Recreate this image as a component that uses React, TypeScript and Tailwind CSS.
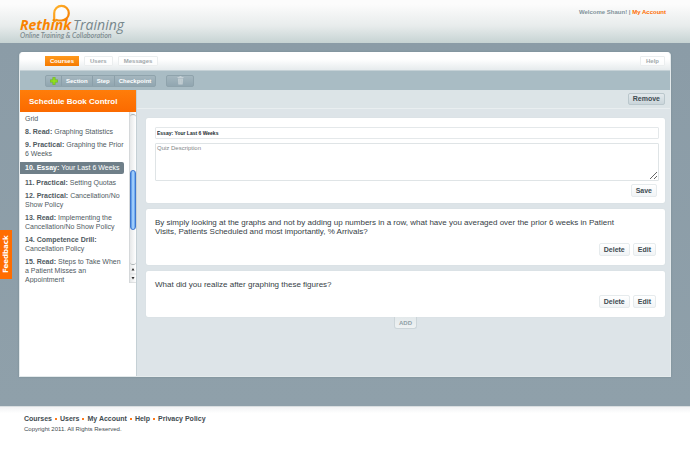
import React from "react";

const lessons = [
  { label: "", title: "Grid" },
  { label: "8. Read:", title: "Graphing Statistics" },
  { label: "9. Practical:", title: "Graphing the Prior 6 Weeks" },
  { label: "10. Essay:", title: "Your Last 6 Weeks", active: true },
  { label: "11. Practical:", title: "Setting Quotas" },
  { label: "12. Practical:", title: "Cancellation/No Show Policy" },
  { label: "13. Read:", title: "Implementing the Cancellation/No Show Policy" },
  { label: "14. Competence Drill:", title: "Cancellation Policy" },
  { label: "15. Read:", title: "Steps to Take When a Patient Misses an Appointment" },
];

const questions = [
  {
    text: "By simply looking at the graphs and not by adding up numbers in a row, what have you averaged over the prior 6 weeks in Patient Visits, Patients Scheduled and most importantly, % Arrivals?",
    height: "h-[56px]",
  },
  { text: "What did you realize after graphing these figures?", height: "h-[46px]" },
];

const footerLinks = ["Courses", "Users", "My Account", "Help", "Privacy Policy"];

function Logo() {
  return (
    <a href="#" className="relative block pt-[18px] pl-[20px] italic">
      <svg className="absolute top-[4px] left-[52px]" width="19" height="19" viewBox="0 0 19 19" aria-hidden="true">
        <defs>
          <linearGradient id="ring" x1="0" y1="0" x2="1" y2="1">
            <stop offset="0" stopColor="#ffb52e" />
            <stop offset="1" stopColor="#f47a00" />
          </linearGradient>
        </defs>
        <path
          d="M2.2 17.4 V9.2 A7.3 7.3 0 1 1 9.5 16.5 C7.4 16.5 5.6 16.3 4.6 15.9 Z"
          fill="#fff"
          fillOpacity="0.7"
          stroke="url(#ring)"
          strokeWidth="2.2"
          strokeLinejoin="round"
        />
      </svg>
      <span className="relative flex gap-[2px] font-['Open_Sans','Noto_Sans',sans-serif] text-[14px] leading-[14px]">
        <span className="font-bold text-[#f98400]">Rethink</span>
        <span className="text-[#77878c]">Training</span>
      </span>
      <span className="block font-['Lato','Noto_Sans',sans-serif] text-[7px] leading-[7px] font-semibold text-[#7d8b8f]">
        Online Training &amp; Collaboration
      </span>
    </a>
  );
}

function Tab({ children, active = false }: { children: React.ReactNode; active?: boolean }) {
  return (
    <button
      type="button"
      className={
        active
          ? "h-[10px] bg-linear-to-b from-[#ff9a1c] to-[#f57a00] px-[5px] text-[6px] leading-[10px] font-bold text-white"
          : "h-[10px] rounded-[1px] border border-[#ebeeef] bg-white/70 px-[5px] text-[6px] leading-[8px] font-bold text-[#a3a9ac]"
      }
    >
      {children}
    </button>
  );
}

function SmallButton({ children }: { children: React.ReactNode }) {
  return (
    <button
      type="button"
      className="h-[13px] rounded-[2px] border border-[#e6ebed] bg-linear-to-b from-white to-[#f1f4f6] px-[4px] text-[7px] leading-[11px] font-bold text-[#3f4c52]"
    >
      {children}
    </button>
  );
}

function Toolbar() {
  const group =
    "flex h-[12px] items-center overflow-hidden rounded-[2px] border border-[#8fa3ac] bg-linear-to-b from-[#a5b7bf] to-[#91a6b0]";
  return (
    <div className="flex h-[20px] items-center gap-[10px] border-t border-[#c5d1d6] bg-[#a9bcc4] pl-[25px]">
      <div className={group}>
        <button type="button" aria-label="Add" className="flex h-full w-[16px] items-center justify-center border-r border-[#8b9fa9]">
          <svg width="8" height="8" viewBox="0 0 8 8" aria-hidden="true">
            <path d="M2.8 0.3h2.4v2.5h2.5v2.4H5.2v2.5H2.8V5.2H0.3V2.8h2.5z" fill="#8fe01c" stroke="#63a81c" strokeWidth="0.5" />
          </svg>
        </button>
        <button type="button" className="h-full border-r border-[#8b9fa9] px-[4px] text-[6px] leading-[10px] font-bold text-white">
          Section
        </button>
        <button type="button" className="h-full border-r border-[#8b9fa9] px-[4px] text-[6px] leading-[10px] font-bold text-white">
          Step
        </button>
        <button type="button" className="h-full px-[4px] text-[6px] leading-[10px] font-bold text-white">
          Checkpoint
        </button>
      </div>
      <div className={group}>
        <button type="button" aria-label="Delete" className="flex h-full w-[26px] items-center justify-center">
          <svg width="7" height="9" viewBox="0 0 7 9" aria-hidden="true">
            <path d="M2.5 0.5h2M0.5 1.5h6" stroke="#c6d1d6" strokeWidth="1" />
            <path d="M1 2.5h5l-0.3 6H1.3z" fill="#c3ced3" />
            <path d="M2.6 3.4v4.2M4.4 3.4v4.2" stroke="#b3c1c7" strokeWidth="0.5" />
          </svg>
        </button>
      </div>
    </div>
  );
}

function Scrollbar() {
  return (
    <div className="flex w-[7px] shrink-0 flex-col border-l border-[#d5d8da] bg-linear-to-r from-[#e6e8e9] to-white" aria-hidden="true">
      <div className="pt-[2px]">
        <div className="h-[56px] rounded-t-[4px] border-t border-[#aab0b3]" />
      </div>
      <div className="h-[60px] rounded-[3px] border border-[#3f78cf] bg-linear-to-r from-[#4c8fe4] via-[#b5dcff] to-[#5b9ded]" />
      <div className="h-[35px] rounded-b-[4px] border-b border-[#aab0b3]" />
      <svg width="6" height="18" viewBox="0 0 6 18">
        <path d="M0 9h6M0 17.5h6" stroke="#d5d8da" strokeWidth="0.7" />
        <path d="M3 3l1.5 2.5h-3zM3 14.5l1.5-2.5h-3z" fill="#333" />
      </svg>
    </div>
  );
}

function Sidebar() {
  return (
    <aside className="w-[117px] shrink-0 border-r border-[#c5d0d5] bg-white">
      <h1 className="h-[22px] bg-linear-to-b from-[#ff7d0a] to-[#fb6a00] pl-[9px] text-[8px] leading-[24px] font-bold whitespace-nowrap text-white">
        Schedule Book Control
      </h1>
      <div className="flex h-[171px]">
        <ul className="flex flex-1 flex-col gap-[4px] overflow-hidden pt-[2px] text-[7px] leading-[9px] text-[#4f5a5f]">
          {lessons.map((lesson) => (
            <li
              key={lesson.title}
              className={
                lesson.active
                  ? "mr-[5px] shrink-0 rounded-r-[2px] bg-[#6f7f89] pl-[5px] leading-[12px] whitespace-nowrap text-white"
                  : "shrink-0 pr-[4px] pl-[5px]"
              }
            >
              <a href="#">
                {lesson.label && <b>{lesson.label} </b>}
                {lesson.title}
              </a>
            </li>
          ))}
        </ul>
        <Scrollbar />
      </div>
    </aside>
  );
}

function Content() {
  return (
    <main className="min-w-0 flex-1 bg-[#dde4e8]">
      <div className="flex h-[19px] items-center justify-end border-b border-[#e9eef0] bg-[#dce4e7] pr-[5px]">
        <button
          type="button"
          className="h-[12px] rounded-[2px] border border-[#bac7cc] bg-linear-to-b from-[#e3e9ec] to-[#cad5da] px-[4px] text-[7px] leading-[10px] font-bold text-[#3f4c52]"
        >
          Remove
        </button>
      </div>
      <div className="flex flex-col gap-[6px] pt-[9px] pr-[5px] pl-[9px]">
        <form className="flex h-[85px] flex-col rounded-[2px] bg-white pt-[9px] pr-[6px] pl-[9px] shadow-[0_0_1px_#c5d0d5]" onSubmit={(e) => e.preventDefault()}>
          <input
            aria-label="Quiz title"
            defaultValue="Essay: Your Last 6 Weeks"
            className="h-[12px] w-full rounded-[1px] border border-[#e4e8ea] px-px text-[5px] leading-[10px] font-bold text-[#222b30]"
          />
          <textarea
            aria-label="Quiz description"
            placeholder="Quiz Description"
            className="mt-[4px] h-[38px] w-full resize-y rounded-[1px] border border-[#dfe4e6] px-px text-[6px] leading-[9px] placeholder:text-[#7f8689]"
          />
          <div className="flex justify-end pt-[3px] pr-[2px]">
            <SmallButton>Save</SmallButton>
          </div>
        </form>
        {questions.map((q) => (
          <section key={q.text} className={`${q.height} flex flex-col justify-between rounded-[2px] bg-white px-[9px] pt-[9px] pb-[9px] shadow-[0_0_1px_#c5d0d5]`}>
            <p className="pr-[30px] text-[8px] leading-[9px] text-[#364045]">{q.text}</p>
            <div className="flex justify-end gap-[3px]">
              <SmallButton>Delete</SmallButton>
              <SmallButton>Edit</SmallButton>
            </div>
          </section>
        ))}
      </div>
      <div className="flex justify-center pr-[5px] pl-[9px]">
        <button type="button" className="h-[12px] rounded-b-[3px] border border-t-0 border-[#ccd5d9] bg-linear-to-b from-[#e3e9eb] to-[#eff2f3] px-[4px] text-[6px] leading-[10px] font-bold text-[#8fa0a7]">
          ADD
        </button>
      </div>
    </main>
  );
}

export default function App() {
  return (
    <div className="bg-white font-['Liberation_Sans',Arial,sans-serif]">
      <header className="flex h-[43px] items-start justify-between bg-linear-to-b from-[#fcfcfc] from-10% via-[#e8ecec] via-60% to-[#c6d3d3]">
        <Logo />
        <p className="pt-[8px] pr-[24px] text-[6px] leading-[9px] font-bold text-[#82939a]">
          Welcome Shaun! | <a href="#" className="text-[#ff6d00]">My Account</a>
        </p>
      </header>

      <div className="bg-linear-to-b from-[#8b9ca7] to-[#8fa0aa] pt-[9px] pr-[19px] pb-[29px] pl-[19px]">
        <div className="min-h-[325px] overflow-hidden rounded-t-[4px] border border-t-0 border-[#e4eaec] bg-[#dde4e8] shadow-[0_0_2px_#71858f]">
          <nav className="flex h-[18px] items-center justify-between bg-linear-to-b from-white from-40% to-[#e6ebed] pr-[5px] pl-[25px]">
            <div className="flex gap-[5px]">
              <Tab active>Courses</Tab>
              <Tab>Users</Tab>
              <Tab>Messages</Tab>
            </div>
            <Tab>Help</Tab>
          </nav>
          <Toolbar />
          <div className="flex min-h-[286px]">
            <Sidebar />
            <Content />
          </div>
        </div>
      </div>

      <footer className="border-t border-[#d9dee0] bg-linear-to-b from-[#f2f3f4] to-white to-10% px-[24px] pt-[7px] pb-[36px] text-[#3f4b50]">
        <ul className="flex text-[7px] leading-[10px] font-bold">
          {footerLinks.map((link, i) => (
            <li key={link} className="flex items-center">
              {i > 0 && <span className="mx-[3px] size-[2px] bg-[#ff7a1a]" />}
              <a href="#">{link}</a>
            </li>
          ))}
        </ul>
        <p className="pt-px text-[6px] leading-[9px]">Copyright 2011. All Rights Reserved.</p>
      </footer>

      <button
        type="button"
        className="fixed top-[230px] left-0 h-[49px] w-[12px] bg-[#ff6d00] font-['DejaVu_Sans','Open_Sans',sans-serif] text-[7px] leading-[12px] font-bold text-white"
      >
        <span className="flex h-full w-full rotate-180 items-center justify-center [writing-mode:vertical-rl]">Feedback</span>
      </button>
    </div>
  );
}
